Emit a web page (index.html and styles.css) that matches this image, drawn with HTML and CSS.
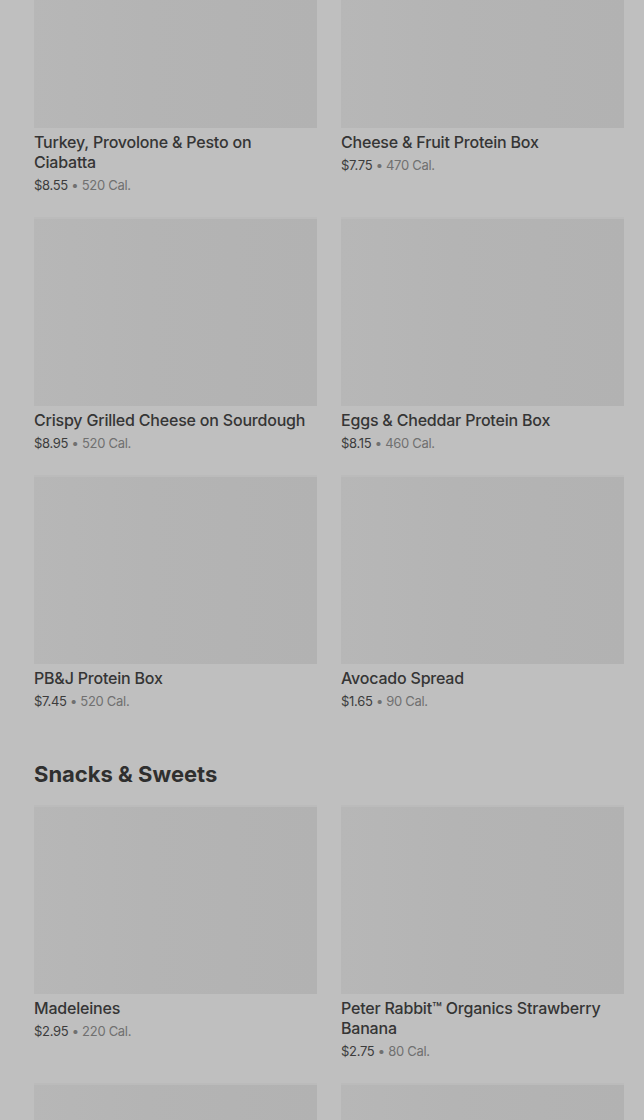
FILE: index.html
```
<!DOCTYPE html>
<html lang="en">
<head>
<meta charset="utf-8">
<title>Menu</title>
<link rel="stylesheet" href="styles.css">
</head>
<body>
<main class="page">
  <section class="section first">
    <div class="grid">
      <div class="card"><div class="thumb"></div><div class="name">Turkey, Provolone &amp; Pesto on Ciabatta</div><div class="meta"><span class="price">$8.55</span> <span class="cal">• 520 Cal.</span></div></div>
      <div class="card"><div class="thumb"></div><div class="name">Cheese &amp; Fruit Protein Box</div><div class="meta"><span class="price">$7.75</span> <span class="cal">• 470 Cal.</span></div></div>
      <div class="card"><div class="thumb"></div><div class="name">Crispy Grilled Cheese on Sourdough</div><div class="meta"><span class="price">$8.95</span> <span class="cal">• 520 Cal.</span></div></div>
      <div class="card"><div class="thumb"></div><div class="name">Eggs &amp; Cheddar Protein Box</div><div class="meta"><span class="price">$8.15</span> <span class="cal">• 460 Cal.</span></div></div>
      <div class="card"><div class="thumb"></div><div class="name">PB&amp;J Protein Box</div><div class="meta"><span class="price">$7.45</span> <span class="cal">• 520 Cal.</span></div></div>
      <div class="card"><div class="thumb"></div><div class="name">Avocado Spread</div><div class="meta"><span class="price">$1.65</span> <span class="cal">• 90 Cal.</span></div></div>
    </div>
  </section>
  <section class="section">
    <h2 class="heading">Snacks &amp; Sweets</h2>
    <div class="grid">
      <div class="card"><div class="thumb"></div><div class="name">Madeleines</div><div class="meta"><span class="price">$2.95</span> <span class="cal">• 220 Cal.</span></div></div>
      <div class="card"><div class="thumb"></div><div class="name">Peter Rabbit™ Organics Strawberry Banana</div><div class="meta"><span class="price">$2.75</span> <span class="cal">• 80 Cal.</span></div></div>
      <div class="card"><div class="thumb"></div></div>
      <div class="card"><div class="thumb"></div></div>
    </div>
  </section>
</main>
</body>
</html>
```
FILE: styles.css
```
html, body {
  margin: 0;
  padding: 0;
  background: #bfbfbf;
  overflow: hidden;
}
body {
  font-family: Inter, Roboto, "Liberation Sans", Arial, sans-serif;
  color: #333333;
}
.page {
  padding: 0 20px 0 34px;
}
.section.first {
  margin-top: -59px;
}
.section + .section {
  margin-top: 50px;
}
.heading {
  margin: 0 0 19px;
  font-size: 22px;
  line-height: 28px;
  font-weight: 700;
  color: #2f2f2f;
  letter-spacing: 0;
}
.grid {
  display: grid;
  grid-template-columns: 1fr 1fr;
  column-gap: 24px;
  row-gap: 25px;
}
.thumb {
  height: 187px;
  background: linear-gradient(90deg, #b7b7b7 0%, #b4b4b4 40%, #b2b2b2 100%);
  box-shadow: 0 -2px 0 #bbbbbb;
}
.name {
  margin-top: 4px;
  font-size: 16px;
  line-height: 20px;
  font-weight: 500;
  color: #353535;
  letter-spacing: -0.2px;
}
.meta {
  margin-top: 4px;
  font-size: 13px;
  line-height: 18px;
  letter-spacing: -0.3px;
}
.price {
  color: #3c3c3c;
}
.cal {
  color: #707070;
}
```
